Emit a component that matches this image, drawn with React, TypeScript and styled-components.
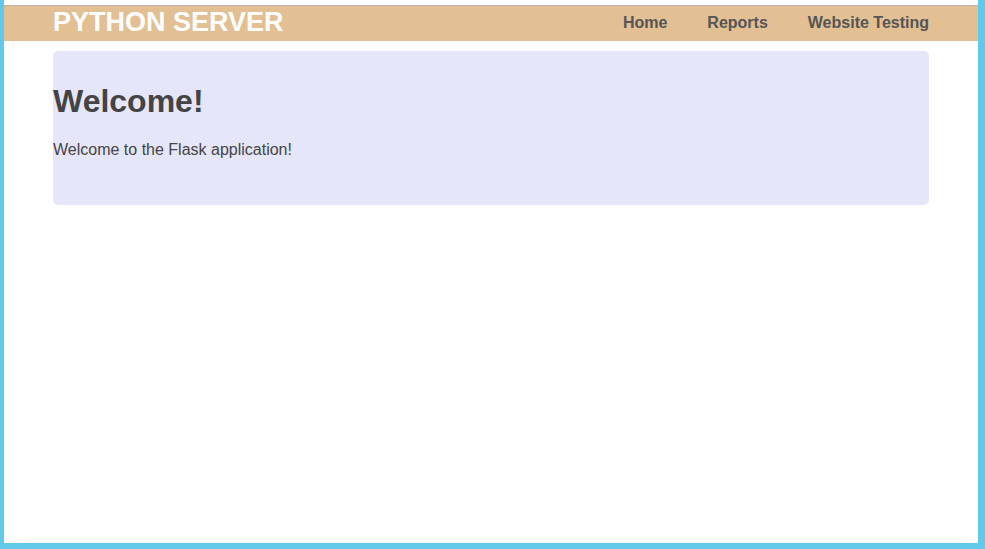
import React from "react";
import styled, { createGlobalStyle } from "styled-components";

const GlobalStyle = createGlobalStyle`
  html, body {
    margin: 0;
    padding: 0;
    height: 100%;
  }
  body {
    background: #63c9ea;
    font-family: "Liberation Sans", Arial, sans-serif;
    overflow: hidden;
  }
  #root {
    height: 100%;
  }
`;

const Frame = styled.div`
  box-sizing: border-box;
  height: 543px;
  margin: 0 7px 0 4px;
  padding-top: 5px;
  background: #ffffff;
`;

const NavBar = styled.header`
  height: 35px;
  border-top: 1px solid #bcb3a6;
  background: #e2c094;
`;

const Container = styled.div`
  width: 876px;
  margin: 0 auto;
`;

const NavInner = styled(Container)`
  display: flex;
  align-items: center;
  justify-content: space-between;
  height: 100%;
`;

const Brand = styled.div`
  color: #ffffff;
  font-size: 27px;
  font-weight: bold;
  line-height: 1;
  margin-top: -2px;
`;

const Links = styled.nav`
  display: flex;
  gap: 40px;
  margin-top: -2px;
`;

const NavLink = styled.a`
  color: #555555;
  font-size: 16px;
  font-weight: bold;
  text-decoration: none;
`;

const Card = styled.main`
  margin-top: 10px;
  padding: 11px 0 46px;
  background: #e6e6fa;
  border-radius: 5px;
  color: #444444;
`;

const Title = styled.h1`
  margin: 21px 0 21px;
  font-size: 32px;
  font-weight: bold;
  line-height: 37px;
`;

const Text = styled.p`
  margin: 0;
  font-size: 16px;
  line-height: 18px;
`;

export default function App() {
  return (
    <>
      <GlobalStyle />
      <Frame>
        <NavBar>
          <NavInner>
            <Brand>PYTHON SERVER</Brand>
            <Links>
              <NavLink href="#">Home</NavLink>
              <NavLink href="#">Reports</NavLink>
              <NavLink href="#">Website Testing</NavLink>
            </Links>
          </NavInner>
        </NavBar>
        <Container>
          <Card>
            <Title>Welcome!</Title>
            <Text>Welcome to the Flask application!</Text>
          </Card>
        </Container>
      </Frame>
    </>
  );
}
